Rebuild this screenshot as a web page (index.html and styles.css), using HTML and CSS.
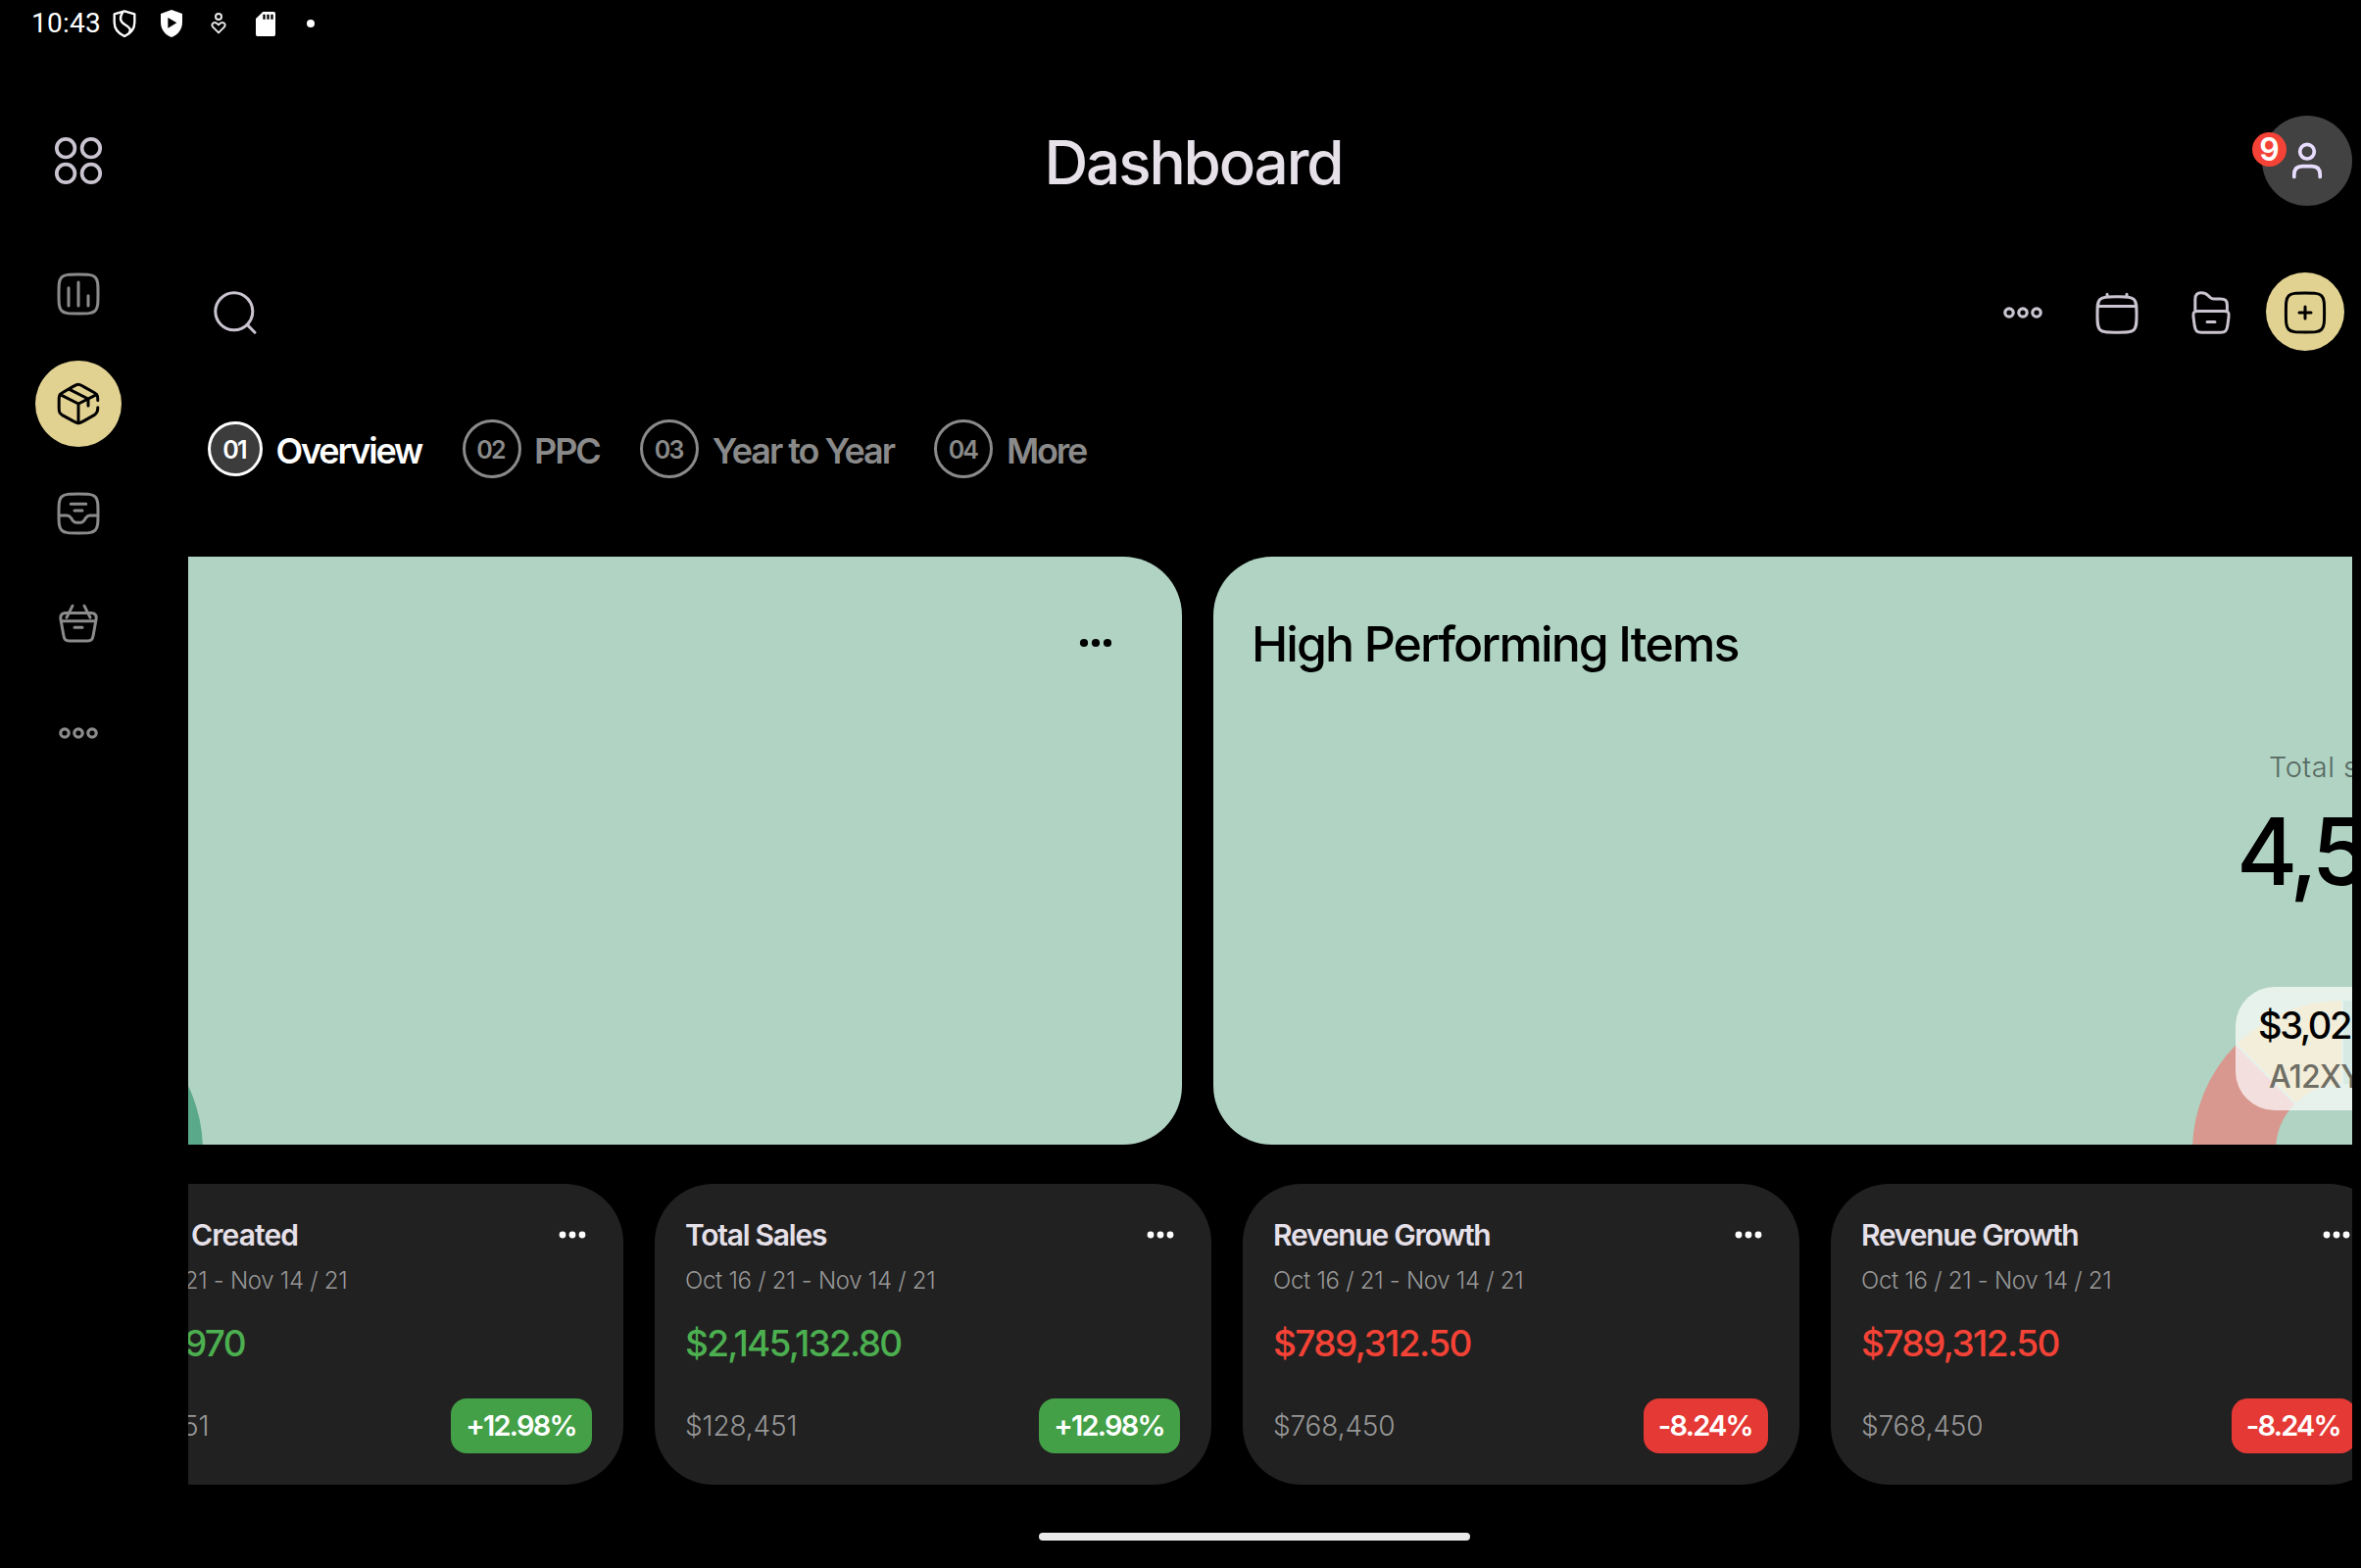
FILE: index.html
```html
<!DOCTYPE html>
<html lang="en">
<head>
<meta charset="utf-8">
<title>Dashboard</title>
<link rel="stylesheet" href="styles.css">
</head>
<body>
<svg class="sprite" aria-hidden="true">
  <symbol id="rings" viewBox="0 0 24 24"><g fill="none" stroke="currentColor" stroke-width="1.6"><circle cx="5" cy="12" r="2.1"/><circle cx="12" cy="12" r="2.1"/><circle cx="19" cy="12" r="2.1"/></g></symbol>
  <symbol id="dots" viewBox="0 0 48 48"><g fill="currentColor"><circle cx="12" cy="24" r="4.1"/><circle cx="24" cy="24" r="4.1"/><circle cx="36" cy="24" r="4.1"/></g></symbol>
</svg>

<div class="status">
  <span class="clock">10:43</span>
  <span class="slot"><svg width="24" height="28" viewBox="0 0 72 84" fill="none" stroke="#fff" stroke-width="7" stroke-linejoin="round"><path d="M36 4 67 13V38C67 57 55 72 36 81 17 72 5 57 5 38V13Z"/><path d="M31 7C19 24 23 36 37 45 52 54 58 60 50 71"/></svg></span>
  <span class="slot"><svg width="22" height="28" viewBox="0 0 66 84"><path fill="#fff" fill-rule="evenodd" d="M33 0 66 12V38C66 60 52 77 33 84 14 77 0 60 0 38V12ZM22 24V56L49 40Z"/></svg></span>
  <span class="slot"><svg width="16" height="22" viewBox="0 0 48 66" fill="none" stroke="#e8e8e8" stroke-width="6"><circle cx="24" cy="12" r="9"/><path d="M24 61 6 43C-1 32 13 24 24 37 35 24 49 32 42 43Z" stroke-linejoin="round"/></svg></span>
  <span class="slot"><svg width="20" height="25" viewBox="0 0 60 75"><path fill="#fff" fill-rule="evenodd" d="M22 0H55Q60 0 60 5V70Q60 75 55 75H5Q0 75 0 70V21ZM22 8V23H29V8ZM34 8V23H41V8ZM46 8V23H53V8Z"/></svg></span>
  <span class="more-dot"></span>
</div>

<header class="top">
  <div class="menu"><svg width="50" height="50" viewBox="0 0 50 50" fill="none" stroke="#cac4d0" stroke-width="3.7"><circle cx="12.1" cy="12.2" r="9.3"/><circle cx="37.9" cy="12.2" r="9.3"/><circle cx="12.1" cy="37.9" r="9.3"/><circle cx="37.9" cy="37.9" r="9.3"/></svg></div>
  <h1>Dashboard</h1>
  <div class="account">
    <div class="avatar"><svg width="48" height="48" viewBox="0 0 48 48" fill="none" stroke="#e9ddff" stroke-width="3.7" stroke-linecap="round"><circle cx="24" cy="14.7" r="7.3"/><path d="M10.8 40.5V38Q10.8 29.6 19.2 29.6H28.8Q37.2 29.6 37.2 38V40.5"/></svg></div>
    <span class="badge">9</span>
  </div>
</header>

<div class="body">
  <nav class="side">
    <a class="item"><svg class="ic" viewBox="0 0 24 24"><path d="M2 12C2 7.3 2 4.9 3.45 3.45 4.9 2 7.3 2 12 2S19.1 2 20.55 3.45C22 4.9 22 7.3 22 12S22 19.1 20.55 20.55C19.1 22 16.7 22 12 22S4.9 22 3.45 20.55C2 19.1 2 16.7 2 12Z"/><path d="M7 8.9V18M12 6V18M17 12.9V18"/></svg></a>
    <a class="item active"><svg class="ic" viewBox="0 0 24 24"><path d="M21.9 10.2C21.9 8.1 21.8 7.3 20.2 6.4L14.7 3.3C13.3 2.4 12.7 2.1 12 2.1S10.7 2.4 9.3 3.2L3.8 6.4C2.3 7.2 2.1 7.9 2.1 10V14C2.1 16.2 2.3 16.9 3.8 17.8L9.3 20.8C10.7 21.6 11.3 21.9 12 21.9S13.3 21.6 14.7 20.8L20.2 17.7C21.5 16.9 21.9 16 21.9 13.9"/><path d="M12 12V21.9M12 12 2.7 7.3M12 12 21.3 7.3M7.2 4.6 17 9.5V13"/></svg></a>
    <a class="item"><svg class="ic" viewBox="0 0 24 24"><path d="M2 12C2 7.3 2 4.9 3.45 3.45 4.9 2 7.3 2 12 2S19.1 2 20.55 3.45C22 4.9 22 7.3 22 12S22 19.1 20.55 20.55C19.1 22 16.7 22 12 22S4.9 22 3.45 20.55C2 19.1 2 16.7 2 12Z"/><path d="M2.2 13H6.2C7.2 13 7.6 13.4 8.2 14.2L9.1 15.6C9.6 16.3 10 16.6 10.8 16.6H13.2C14 16.6 14.4 16.3 14.9 15.6L15.8 14.2C16.4 13.4 16.8 13 17.8 13H21.8M8.1 7.1H15.9M10 10.5H14"/></svg></a>
    <a class="item"><svg class="ic" viewBox="0 0 24 24"><path d="M2.9 9.4C2.9 7.3 3.9 6.8 5.4 6.8H18.6C20.1 6.8 21.1 7.3 21.1 9.4 21.1 10 20.9 10.7 20.8 11.2L19.6 18C19.2 20.3 18.6 21 16.6 21H7.4C5.4 21 4.8 20.3 4.4 18L3.2 11.2C3.1 10.7 2.9 10 2.9 9.4ZM3.2 10.9H20.8M9 3.1 6 9.1M15 3.1 18 9.1M10 14.1H14"/></svg></a>
    <a class="item"><svg class="ic"><use href="#rings"/></svg></a>
  </nav>

  <main class="content">
    <div class="toolbar">
      <svg class="ic search" viewBox="0 0 24 24"><circle cx="11.4" cy="11.4" r="9.5"/><path d="M18.1 18.2 22 22.1"/></svg>
      <div class="tools">
        <span class="tool"><svg class="ic"><use href="#rings"/></svg></span>
        <span class="tool"><svg class="ic" viewBox="0 0 24 24"><path d="M2 12.7C2 8.6 2 6.5 3.4 5.2 4.8 3.9 7 3.9 11 3.9H13C17 3.9 19.2 3.9 20.6 5.2 22 6.5 22 8.6 22 12.7V13.3C22 17.4 22 19.5 20.6 20.8 19.2 22.1 17 22.1 13 22.1H11C7 22.1 4.8 22.1 3.4 20.8 2 19.5 2 17.4 2 13.3ZM2.3 8.8H21.7M7 3.9V2.6M17 3.9V2.6"/></svg></span>
        <span class="tool"><svg class="ic" viewBox="0 0 24 24"><path d="M3.9 11.2V5.2C3.9 3 4.9 1.9 7 1.9 8.7 1.9 9.4 2.2 10.4 3.2L11.6 4.3C12.3 4.9 12.6 5 13.4 5H16.6C19.4 5 20.2 5.8 20.2 8.3V11.2M5.2 11.2H18.8C20.8 11.2 21.3 12 21 14.2L20.4 18.8C20 21.4 19.2 22.1 16.8 22.1H7.2C4.8 22.1 4 21.4 3.6 18.8L3 14.2C2.7 12 3.2 11.2 5.2 11.2ZM10 16.8H14"/></svg></span>
        <span class="tool add"><svg class="ic" viewBox="0 0 24 24"><path d="M2.2 12C2.2 7.3 2.2 4.9 3.6 3.45C5 2 7.3 2 12 2S19 2 20.4 3.45C21.8 4.9 21.8 7.3 21.8 12S21.8 19.1 20.4 20.55C19 22 16.7 22 12 22S5 22 3.6 20.55C2.2 19.1 2.2 16.7 2.2 12ZM12 9V15M9 12H15"/></svg></span>
      </div>
    </div>

    <div class="tabs">
      <div class="tab on"><span class="num">01</span><span class="label">Overview</span></div>
      <div class="tab"><span class="num">02</span><span class="label">PPC</span></div>
      <div class="tab"><span class="num">03</span><span class="label long">Year to Year</span></div>
      <div class="tab"><span class="num">04</span><span class="label">More</span></div>
    </div>

    <div class="strip charts">
      <section class="chart-card">
        <div class="chart-head"><h2></h2><svg class="dots"><use href="#dots"/></svg></div>
        <svg class="donut" viewBox="0 0 306 147" fill="none" stroke-width="85"><path stroke="#5ba98b" d="M42.5 153A110.5 110.5 0 0 1 263.5 153"/></svg>
      </section>
      <section class="chart-card">
        <div class="chart-head"><h2>High Performing Items</h2><svg class="dots"><use href="#dots"/></svg></div>
        <svg class="donut" viewBox="0 0 306 147" fill="none" stroke-width="85">
          <path stroke="#d8988f" d="M42.5 153A110.5 110.5 0 0 1 74.9 74.9"/>
          <path stroke="#d7c784" d="M74.9 74.9A110.5 110.5 0 0 1 153 42.5"/>
          <path stroke="#79bca5" d="M153 42.5A110.5 110.5 0 0 1 263.5 153"/>
          <path stroke="#b0d3c3" stroke-width="2" d="M153 0V90M43 43 107 107"/>
        </svg>
        <div class="summary">
          <p class="caption">Total s</p>
          <p class="total">4,5</p>
        </div>
        <div class="tip"><strong>$3,02</strong><span>A12XY</span></div>
      </section>
    </div>

    <div class="strip stats">
      <section class="stat up">
        <div class="stat-head"><h3 class="cut-title">Created</h3><svg class="dots"><use href="#dots"/></svg></div>
        <p class="date">Oct 16 / 21 - Nov 14 / 21</p>
        <p class="value cut-value">970</p>
        <div class="foot"><span class="prev">$128,451</span><span class="pill">+12.98%</span></div>
      </section>
      <section class="stat up">
        <div class="stat-head"><h3>Total Sales</h3><svg class="dots"><use href="#dots"/></svg></div>
        <p class="date">Oct 16 / 21 - Nov 14 / 21</p>
        <p class="value">$2,145,132.80</p>
        <div class="foot"><span class="prev">$128,451</span><span class="pill">+12.98%</span></div>
      </section>
      <section class="stat down">
        <div class="stat-head"><h3>Revenue Growth</h3><svg class="dots"><use href="#dots"/></svg></div>
        <p class="date">Oct 16 / 21 - Nov 14 / 21</p>
        <p class="value">$789,312.50</p>
        <div class="foot"><span class="prev">$768,450</span><span class="pill">-8.24%</span></div>
      </section>
      <section class="stat down">
        <div class="stat-head"><h3>Revenue Growth</h3><svg class="dots"><use href="#dots"/></svg></div>
        <p class="date">Oct 16 / 21 - Nov 14 / 21</p>
        <p class="value">$789,312.50</p>
        <div class="foot"><span class="prev">$768,450</span><span class="pill">-8.24%</span></div>
      </section>
    </div>
  </main>
</div>

<div class="home-bar"></div>
</body>
</html>
```
FILE: styles.css
```css
* { box-sizing: border-box; margin: 0; padding: 0; }

body {
  width: 2409px;
  height: 1600px;
  overflow: hidden;
  display: flex;
  flex-direction: column;
  background: #000;
  color: #fff;
  font-family: Inter, "Noto Sans", sans-serif;
}

svg { display: block; flex: none; }
.sprite { position: absolute; width: 0; height: 0; }
.ic { width: 48px; height: 48px; fill: none; stroke: currentColor; stroke-width: 1.5; stroke-linecap: round; stroke-linejoin: round; }

/* status bar */
.status { display: flex; align-items: center; height: 48px; padding-left: 32px; flex: none; }
.clock { width: 71px; font: 400 28px/46px Roboto, sans-serif; letter-spacing: .25px; white-space: nowrap; }
.slot { width: 48px; display: flex; justify-content: center; }
.more-dot { width: 8px; height: 8px; margin-left: 18px; border-radius: 50%; background: #fff; }

/* header */
.top { display: grid; grid-template-columns: 160px 1fr 125px; align-items: center; width: 2400px; height: 92px; margin-top: 70px; flex: none; }
.menu { display: flex; justify-content: center; }
.top h1 { padding-top: 3px; text-align: center; font-size: 62px; font-weight: 540; line-height: 84px; letter-spacing: -2.15px; color: #e6e0e9; }
.account { position: relative; display: flex; justify-content: flex-end; }
.avatar { display: flex; align-items: center; justify-content: center; width: 92px; height: 92px; border-radius: 50%; background: #424242; }
.badge { position: absolute; left: 23px; top: 17px; width: 35px; height: 35px; border-radius: 50%; background: #f44336; font-size: 32px; font-weight: 600; line-height: 35px; text-align: center; }

.body { display: flex; width: 2400px; flex: none; }

/* side navigation */
.side { display: flex; flex-direction: column; align-items: center; gap: 24px; width: 160px; padding-top: 46px; flex: none; }
.item { display: flex; align-items: center; justify-content: center; width: 88px; height: 88px; border-radius: 50%; color: #8b8b8b; }
.item.active { background: #e2d292; color: #000; }

.content { width: 2208px; margin-left: 32px; padding-top: 68px; flex: none; }

/* toolbar */
.toolbar { display: flex; align-items: center; justify-content: space-between; height: 80px; padding: 0 8px 0 24px; color: #cac4d0; }
.search { margin-top: 2px; }
.tools { display: flex; gap: 16px; }
.tool { display: flex; align-items: center; justify-content: center; width: 80px; height: 80px; padding-top: 2px; border-radius: 50%; }
.add { padding-top: 1px; background: #e2d292; color: #000; }

/* tabs */
.tabs { display: flex; align-items: center; gap: 41.5px; height: 60px; margin: 70px 0 0 20px; }
.tab { display: flex; align-items: center; gap: 13.5px; color: #8a8a8a; }
.num { display: flex; align-items: center; justify-content: center; width: 60px; height: 60px; padding: 2px 2px 0 0; border: 3px solid #8a8a8a; border-radius: 50%; font-size: 25px; font-weight: 580; letter-spacing: -1.8px; }
.label { padding-top: 4px; font-size: 36px; font-weight: 560; line-height: 48px; letter-spacing: -2.15px; white-space: nowrap; }
.label.long { letter-spacing: -2.05px; }
.on { color: #fff; }
.on .num { width: 56px; height: 56px; border-color: #fff; background: #3c3c3c; }

/* scrolled card strips */
.strip { display: flex; gap: 32px; overflow: hidden; }
.strip > * { flex: none; }

.charts { height: 600px; margin-top: 80px; }
.chart-card { position: relative; width: 2304px; height: 600px; padding-top: 64px; border-radius: 60px; background: #b0d3c3; color: #000; overflow: hidden; }
.chart-card:first-child { margin-left: -1290px; }
.chart-head { display: flex; align-items: center; justify-content: space-between; height: 48px; padding: 0 64px 0 39px; }
.chart-head h2 { padding-top: 2px; font-size: 50px; font-weight: 520; line-height: 48px; letter-spacing: -1.9px; white-space: nowrap; }
.dots { width: 48px; height: 48px; }
.donut { position: absolute; left: 999px; bottom: 0; width: 306px; height: 147px; }
.summary { margin: 79px 0 0 1044px; white-space: nowrap; }
.caption { padding-left: 33px; font-size: 29px; font-weight: 300; line-height: 48px; letter-spacing: .5px; color: #586a62; }
.total { font-size: 95px; font-weight: 540; line-height: 124px; letter-spacing: -5px; }
.tip { position: absolute; left: 1043px; top: 439px; display: flex; flex-direction: column; width: 218px; height: 126px; padding: 15px 0 0 23px; border-radius: 40px; background: rgba(255, 255, 255, .7); white-space: nowrap; }
.tip strong { font-size: 38px; font-weight: 520; line-height: 48px; letter-spacing: -2.4px; }
.tip span { padding-left: 11px; font-size: 32px; font-weight: 520; line-height: 58px; letter-spacing: -.9px; color: #6f6e65; }

.stats { height: 307px; margin-top: 40px; }
.stat { display: flex; flex-direction: column; width: 568px; height: 307px; padding: 32px 32px 32px 31px; border-radius: 60px; background: #212121; white-space: nowrap; }
.stat:first-child { margin-left: -124px; }
.stat-head { display: flex; align-items: center; justify-content: space-between; height: 40px; }
.stat-head h3 { font-size: 30px; font-weight: 570; line-height: 40px; letter-spacing: -1.25px; color: #e6e0e9; }
.stat-head .cut-title { padding-left: 96px; letter-spacing: -.9px; }
.stat .dots { width: 40px; height: 40px; }
.date { margin-top: 11px; font-size: 24px; font-weight: 320; line-height: 32px; letter-spacing: -.28px; color: #979797; }
.value { margin-top: 24px; font-size: 37px; font-weight: 540; line-height: 48px; letter-spacing: -1.75px; }
.down .value { letter-spacing: -1.6px; }
.cut-value { padding-left: 89px; }
.up .value { color: #4caf50; }
.down .value { color: #f44336; }
.foot { display: flex; align-items: center; justify-content: space-between; height: 56px; margin-top: auto; }
.prev { font-size: 28px; font-weight: 330; letter-spacing: -.15px; color: #979797; }
.pill { height: 56px; padding: 0 16px 0 15px; border-radius: 16px; font-size: 29px; font-weight: 600; line-height: 56px; letter-spacing: -1.75px; }
.up .pill { background: #43a047; }
.down .pill { background: #e53935; }

.home-bar { width: 440px; height: 8px; margin: 49px 0 0 1060px; border-radius: 4px; background: #ebebeb; flex: none; }
```
